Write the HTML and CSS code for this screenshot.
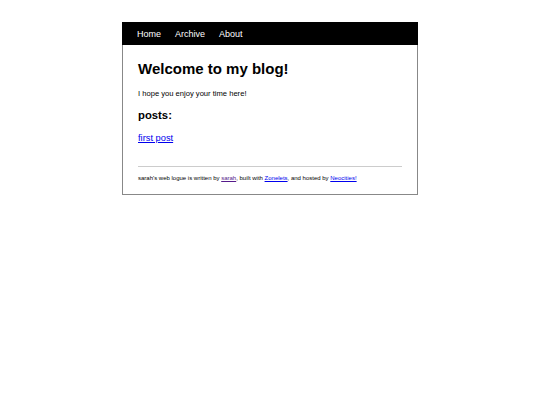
FILE: index.html
```html
<!DOCTYPE html>
<html>
<head>
<meta charset="utf-8">
<link rel="stylesheet" href="styles.css">
</head>
<body>
<div class="page">
  <nav class="nav">
    <a href="#">Home</a>
    <a href="#">Archive</a>
    <a href="#">About</a>
  </nav>
  <main class="content">
    <h1 class="title">Welcome to my blog!</h1>
    <p class="intro">I hope you enjoy your time here!</p>
    <h2 class="posts-head">posts:</h2>
    <ul class="posts">
      <li><a href="#" class="post-link">first post</a></li>
    </ul>
    <hr class="rule">
    <footer class="footer">sarah's web logue is written by <a href="#" class="visited">sarah</a>, built with <a href="#" class="link">Zonelets</a>, and hosted by <a href="#" class="link">Neocities!</a></footer>
  </main>
</div>
</body>
</html>
```
FILE: styles.css
```css
html, body {
  margin: 0;
  padding: 0;
  background: #fff;
}
body {
  font-family: "Liberation Sans", Arial, sans-serif;
  color: #000;
}
.page {
  width: 294px;
  margin: 22px auto 0;
  border: 1px solid #888;
  border-top: none;
}
.nav {
  background: #000;
  height: 23px;
  display: flex;
  align-items: center;
  gap: 14px;
  padding-left: 15px;
  margin: 0 -1px;
}
.nav a {
  color: #fff;
  text-decoration: none;
  font-size: 9px;
}
.content {
  padding: 0 15px 12px;
}
.title {
  font-size: 15px;
  font-weight: bold;
  margin: 15px 0 0;
  line-height: 18px;
}
.intro {
  font-size: 7.6px;
  margin: 11px 0 0;
  line-height: 10px;
}
.posts-head {
  font-size: 11.3px;
  margin: 10px 0 0;
  line-height: 13px;
}
.posts {
  list-style: none;
  padding: 0;
  margin: 5px 0 0;
}
.post-link {
  font-size: 9.3px;
  color: #0000ee;
  line-height: 11px;
}
.rule {
  border: none;
  border-top: 1px solid #ccc;
  margin: 21px 0 0;
  height: 0;
}
.footer {
  font-size: 6px;
  margin-top: 7px;
  line-height: 8px;
}
.visited {
  color: #551a8b;
}
.link {
  color: #0000ee;
}
```
